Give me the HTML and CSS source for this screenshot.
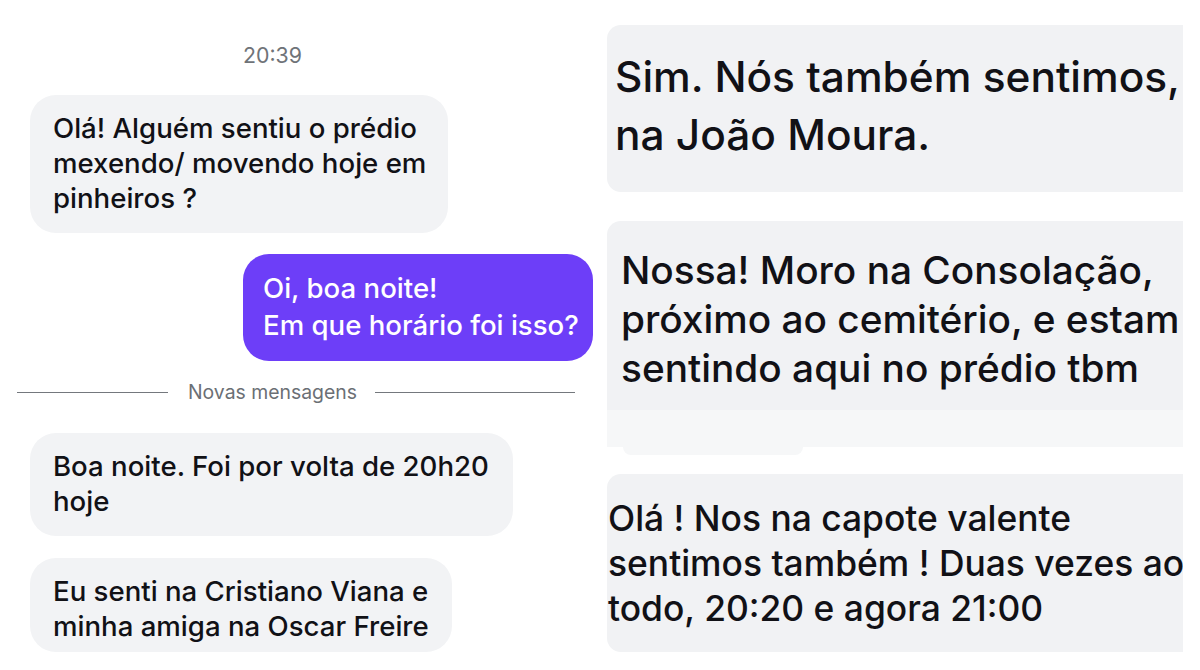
FILE: index.html
```html
<!DOCTYPE html>
<html lang="pt-BR">
<head>
<meta charset="utf-8">
<title>Conversa</title>
<link rel="stylesheet" href="styles.css">
</head>
<body>
<div class="page">
  <section class="left">
    <div class="time">20:39</div>
    <div class="bubble in b1">Olá! Alguém sentiu o prédio<br>mexendo/ movendo hoje em<br>pinheiros ?</div>
    <div class="bubble out b2">Oi, boa noite!<br>Em que horário foi isso?</div>
    <div class="divider"><span class="rule rule-l"></span><span class="divider-text">Novas mensagens</span><span class="rule rule-r"></span></div>
    <div class="bubble in b3">Boa noite. Foi por volta de 20h20<br>hoje</div>
    <div class="bubble in b4">Eu senti na Cristiano Viana e<br>minha amiga na Oscar Freire</div>
  </section>
  <section class="right">
    <div class="zbubble z1">Sim. Nós também sentimos,<br>na João Moura.</div>
    <div class="zbubble z2">Nossa! Moro na Consolação,<br>próximo ao cemitério, e estam<br>sentindo aqui no prédio tbm</div>
    <div class="zfade"></div>
    <div class="ztab"></div>
    <div class="zbubble z3">Olá ! Nos na capote valente<br>sentimos também ! Duas vezes ao<br>todo, 20:20 e agora 21:00</div>
  </section>
</div>
</body>
</html>
```
FILE: styles.css
```css
* { box-sizing: border-box; }
html, body { margin: 0; padding: 0; background: #ffffff; }
body { font-family: "Inter", "Liberation Sans", sans-serif; color: #111116; }

.page {
  width: 1200px;
  height: 670px;
  display: flex;
  overflow: hidden;
}

/* ---------- left column ---------- */
.left {
  width: 600px;
  flex: none;
  display: flex;
  flex-direction: column;
  align-items: flex-start;
  padding: 42px 7px 0 30px;
}

.time {
  margin-left: -30px;
  width: 545px;
  height: 26px;
  line-height: 26px;
  text-align: center;
  font-size: 21.3px;
  font-weight: 400;
  color: #6f7378;
}

.bubble {
  font-size: 27.6px;
  font-weight: 500;
  line-height: 35px;
  border-radius: 26px;
  white-space: nowrap;
}
.in { background: #f2f3f5; color: #111116; padding-left: 23px; }
.out { background: #6d3ef8; color: #ffffff; padding-left: 20px; align-self: flex-end; line-height: 37px; }

.b1 { width: 418px; margin-top: 27px; padding-top: 16px; padding-bottom: 17px; }
.b2 { width: 350px; margin-top: 21px; padding-top: 16px; padding-bottom: 17px; }
.b3 { width: 483px; margin-top: 29px; padding-top: 16px; padding-bottom: 17px; }
.b4 { width: 422px; margin-top: 22px; padding-top: 16px; padding-bottom: 8px; }

.divider {
  margin-left: -13px;
  margin-top: 19px;
  width: 558px;
  height: 24px;
  display: flex;
  align-items: center;
}
.rule { height: 1px; background: #74787d; }
.rule-l { width: 151px; flex: none; }
.rule-r { flex: 1; }
.divider-text {
  margin: 0 18px 0 20px;
  font-size: 19.4px;
  font-weight: 400;
  color: #6b6f75;
  line-height: 24px;
  white-space: nowrap;
}

/* ---------- right column (zoomed crop) ---------- */
.right {
  margin-left: 7px;
  width: 576px;
  flex: none;
  overflow: hidden;
  padding-top: 25px;
  display: flex;
  flex-direction: column;
}

.zbubble {
  width: 640px;
  background: #f1f2f4;
  color: #111116;
  font-weight: 500;
  white-space: nowrap;
  border-radius: 14px 0 0 14px;
}
.z1 { font-size: 42.4px; line-height: 58px; padding: 23px 0 28px 8px; }
.z2 { font-size: 38.8px; line-height: 49px; padding: 24px 0 18px 14px; margin-top: 29px; border-radius: 14px 0 0 0; }
.z3 { font-size: 35.4px; line-height: 45px; padding: 22px 0 21px 1px; margin-top: 19px; }

.zfade { width: 640px; height: 37px; background: #f6f7f8; }
.ztab {
  width: 180px;
  height: 8px;
  margin-left: 16px;
  background: #f6f7f8;
  border-radius: 0 0 20px 20px;
}
```
